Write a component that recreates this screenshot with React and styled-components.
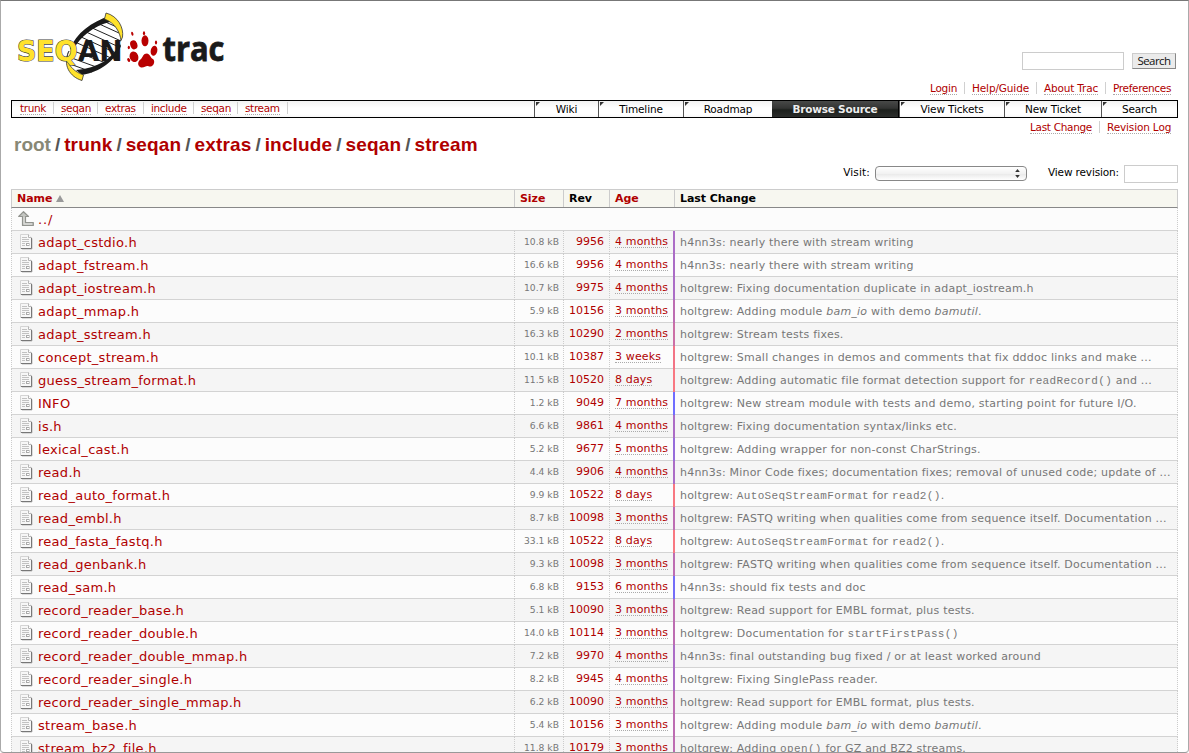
import React from "react";
import styled, { createGlobalStyle } from "styled-components";

const Global = createGlobalStyle`
  * { box-sizing: border-box; }
  body { margin: 0; background: #fff; color: #000; font-family: Verdana, "DejaVu Sans", sans-serif; font-size: 10.5px; }
`;

const Frame = styled.div`
  width: 1189px;
  height: 753px;
  overflow: hidden;
  border: 1px solid #aaa;
  border-top-color: #777;
  border-bottom-color: #999;
  border-radius: 0 0 4px 4px;
  padding: 0 10px;
  display: flex;
  flex-direction: column;
`;

const Header = styled.header`
  flex: none;
  height: 80px;
  display: flex;
  justify-content: space-between;
`;

const SearchForm = styled.div`
  display: flex;
  align-items: flex-start;
  gap: 8px;
  padding: 51px 2px 0 0;
`;

const TextInput = styled.input`
  width: ${(p) => p.$width}px;
  height: 18px;
  border: 1px solid #ccc;
  background: #fff;
  padding: 0;
`;

const SearchButton = styled.button`
  width: 44px;
  height: 16px;
  margin-top: 1px;
  padding: 0 0 1px;
  border: 1px solid #888;
  border-top-color: #ccc;
  border-left-color: #ccc;
  background: #ebebeb;
  color: #111;
  font: 11.5px/12px "Open Sans", sans-serif;
  letter-spacing: -0.55px;
`;

const LinkBar = styled.nav`
  flex: none;
  height: ${(p) => p.$height}px;
  padding-top: ${(p) => p.$top}px;
  display: flex;
  justify-content: flex-end;
`;

const BarItem = styled.span`
  width: ${(p) => p.$width}px;
  height: 12px;
  padding-left: 7px;
  border-left: 1px solid ${(p) => (p.$first ? "transparent" : "#d0d0d0")};
`;

const Link = styled.a`
  display: inline-block;
  height: 13px;
  line-height: 12px;
  color: #b00000;
  border-bottom: 1px dotted #aaa;
  letter-spacing: ${(p) => p.$spacing || -0.25}px;
  white-space: nowrap;
`;

const AgeLink = styled(Link)`
  line-height: 14px;
  letter-spacing: 0.15px;
`;

const MainNav = styled.nav`
  flex: none;
  height: 18px;
  border: 1px solid #000;
  background: linear-gradient(#f2f2f2, #fff 45%, #fff 80%, #f7f7f7);
  display: flex;
  justify-content: space-between;
`;

const Path = styled.div`
  display: flex;
  padding-top: 1px;
`;

const PathItem = styled.span`
  width: ${(p) => p.$width}px;
  height: 12px;
  padding-left: ${(p) => (p.$first ? 8 : 7)}px;
  border-right: 1px solid #d0d0d0;
`;

const Tabs = styled.div`
  display: flex;
`;

const Tab = styled.div`
  position: relative;
  width: ${(p) => p.$width}px;
  height: 16px;
  line-height: 16px;
  text-align: center;
  letter-spacing: -0.15px;
  border-left: 1px solid #555;
  &::before {
    content: "";
    position: absolute;
    left: 1px;
    top: 1px;
    border-top: 4px solid #333;
    border-right: 4px solid transparent;
  }
`;

const ActiveTab = styled(Tab)`
  color: #eee;
  font-weight: bold;
  letter-spacing: -0.22px;
  border-left: 0;
  border-right: 1px solid #000;
  background: linear-gradient(#484948, #333433 45%, #1d201d 55%, #2b2d2b);
  &::before { display: none; }
`;

const Title = styled.h1`
  flex: none;
  height: 26px;
  margin: 0;
  padding: 0 0 0 3px;
  font: bold 19px/20px "Liberation Sans", Arial, sans-serif;
  display: flex;
`;

const Crumb = styled.span`
  color: ${(p) => (p.$root ? "#888875" : "#b00000")};
  letter-spacing: ${(p) => (p.$root ? 0 : 0.16)}px;
`;

const Slash = styled.span`
  width: 13.2px;
  text-align: center;
  color: #555;
`;

const Jump = styled.div`
  flex: none;
  height: 28px;
  padding-top: 4px;
  display: flex;
  justify-content: flex-end;
  align-items: flex-start;
`;

const Label = styled.label`
  line-height: 14px;
  letter-spacing: ${(p) => p.$spacing}px;
  margin-right: 5px;
`;

const Select = styled.div`
  width: 152px;
  height: 15px;
  margin: 1px 21px 0 0;
  border: 1px solid #888;
  border-radius: 4px;
  background: linear-gradient(#fff, #f2f2f2 50%, #e8e8e8 51%, #fff);
  display: flex;
  justify-content: flex-end;
  align-items: center;
  padding-right: 6px;
`;

const Listing = styled.div`
  flex: none;
`;

const columns = "503px 49px 46px 64px 1fr";

const HeadRow = styled.div`
  display: grid;
  grid-template-columns: ${columns};
  height: 19px;
  background: #f7f7f0;
  border: 1px solid #ccc;
  border-bottom-color: #888;
`;

const HeadCell = styled.div`
  padding-left: 5px;
  border-left: ${(p) => (p.$first ? 0 : 1)}px solid #ccc;
  margin-left: ${(p) => (p.$first || p.$last ? 0 : -1)}px;
  color: ${(p) => (p.$sortable ? "#b00000" : "#000")};
  font-weight: bold;
  font-size: 11px;
  line-height: 17px;
  letter-spacing: -0.05px;
  display: flex;
  align-items: center;
  gap: 4px;
`;

const Row = styled.div`
  display: grid;
  grid-template-columns: ${columns};
  height: 23px;
  background: ${(p) => (p.$odd ? "#f5f5f5" : "#fcfcfc")};
  border-bottom: 1px solid #d3d3d3;
  line-height: 22px;
  white-space: nowrap;
`;

const NameCell = styled.div`
  display: flex;
  align-items: flex-start;
  border-left: 1px dotted #ccc;
  padding-left: ${(p) => (p.$up ? 6 : 8)}px;
  gap: ${(p) => (p.$up ? 4 : 5)}px;
  color: #b00000;
  font-size: 13px;
  line-height: 23px;
  letter-spacing: ${(p) => (p.$up ? 0.9 : 0.28)}px;
  svg { flex: none; margin-top: 3px; }
`;

const SizeCell = styled.div`
  border-left: 1px dotted #ccc;
  padding-right: 4px;
  text-align: right;
  color: #777;
  font-size: 9.2px;
`;

const RevCell = styled.div`
  border-left: 1px dotted #ccc;
  padding-right: 5px;
  text-align: right;
  color: #b00000;
  font-size: 11px;
  line-height: 22px;
`;

const AgeCell = styled.div`
  border-left: 1px dotted #ccc;
  padding: 4px 0 0 5px;
  font-size: 11px;
  line-height: 12px;
`;

const ChangeCell = styled.div`
  border-left: 2px solid ${(p) => p.$bar};
  border-right: 1px dotted #ccc;
  padding-left: 5px;
  overflow: hidden;
  color: #777;
  font-size: 11px;
  line-height: 24px;
  letter-spacing: 0.21px;
`;

const UpRest = styled.div`
  grid-column: 2 / -1;
  border-right: 1px dotted #ccc;
`;

const Code = styled.code`
  font-family: "Liberation Mono", monospace;
  font-size: 11px;
  letter-spacing: 0.35px;
`;

function Logo() {
  return (
    <svg width="222" height="80" viewBox="11 1 222 80">
      <path d="M107 17C92 22 77 33 71 48C66 61 70 69 82 74C97 72 113 60 119 46C124 33 119 22 107 17Z" fill="#fff" />
      <path d="M97 23L119 33M90 27L121 41M84 31L119 47M79 36L116 53M75 42L111 58M71 50L106 63M69 57L99 68M70 64L92 72M101 20L119 28" stroke="#222" strokeWidth="1" fill="none" />
      <path d="M109 16C92 22 76 33 70 49L73 50C80 37 93 26 110 22Z" fill="#1a1a1a" />
      <path d="M120 44C112 59 98 68 76 70L82 75C100 72 115 61 121 46Z" fill="#1a1a1a" />
      <path d="M106 13C118 16 124 28 122.500 37L121 40.500C120 32 115 23 104.500 19Z" fill="#ffe22c" stroke="#333" strokeWidth=".8" />
      <path d="M68 53C65 62 72 71 83.500 75L82 80.500C70 77 62 65 69 51Z" fill="#ffe22c" stroke="#333" strokeWidth=".8" />
      <g fontFamily="DejaVu Sans, sans-serif" fontWeight="bold" fontSize="29">
        <text x="17" y="61" textLength="60.500" lengthAdjust="spacingAndGlyphs" fill="#ffe22c" stroke="#444" strokeWidth="1.200" paintOrder="stroke">SEQ</text>
        <text x="77.700" y="61" textLength="45" lengthAdjust="spacingAndGlyphs" fill="#1a1a1a">AN</text>
      </g>
      <g fill="#b90000">
        <ellipse cx="133.800" cy="44.800" rx="3.500" ry="4.600" transform="rotate(-20 133.800 44.800)" />
        <ellipse cx="145" cy="40.800" rx="3.500" ry="5.500" />
        <ellipse cx="154" cy="50.800" rx="3.300" ry="5.100" transform="rotate(12 154 50.800)" />
        <ellipse cx="134" cy="56.800" rx="4.300" ry="5.400" transform="rotate(-22 134 56.800)" />
        <path d="M147 53.500C151 54.500 150 58 153 59C156 62 153 67.500 149 66.500C146 65 145 68 141 67.500C137 66 137.500 61 141 59C143 57 143 53.500 147 53.500Z" />
        <ellipse cx="132.300" cy="33.800" rx="1.100" ry="2" transform="rotate(-15 132.300 33.800)" />
        <ellipse cx="144" cy="33.300" rx="1.100" ry="2" />
        <ellipse cx="156" cy="42.500" rx="1.100" ry="2" />
        <ellipse cx="128.800" cy="47.500" rx="1.100" ry="1.800" />
        <ellipse cx="128.700" cy="60" rx="1.300" ry="2" transform="rotate(-30 128.700 60)" />
      </g>
      <text x="162.500" y="61" textLength="62" lengthAdjust="spacingAndGlyphs" fill="#1a1a1a" stroke="#1a1a1a" strokeWidth=".8" fontFamily="Open Sans, sans-serif" fontWeight="bold" fontSize="34">trac</text>
    </svg>
  );
}

function FileIcon() {
  return (
    <svg width="13" height="16" viewBox="0 0 13 16">
      <path d="M12 4.500V15H2" fill="none" stroke="#bbb" />
      <path d="M.5 .5H8.500L11.500 3.500V14.500H.5Z" fill="#f7f7f7" stroke="#d4d4d4" />
      <path d="M11.500 4V14.500H1" fill="none" stroke="#777" />
      <path d="M8.500 .5V3.500H11.500" fill="#fff" stroke="#b5b5b5" />
      <path d="M2 3.500H7M2 5.500H9M2 7.500H9M2 9.500H5M2 11.500H5" stroke="#c2c2c2" />
      <rect x="6.500" y="9.500" width="2.500" height="2" fill="#fff" stroke="#aaa" />
    </svg>
  );
}

function UpIcon() {
  return (
    <svg width="16" height="16" viewBox="0 0 16 16">
      <path d="M5.500 .7L10.500 5.500H7.500V11.500H15.300V14.500H4.500V5.500H.7Z" fill="#c4c6c2" stroke="#92948f" strokeWidth="1.200" strokeLinejoin="round" />
      <path d="M6 6V13H14" fill="none" stroke="#e0e0de" />
    </svg>
  );
}

const pathItems = [["trunk", 42], ["seqan", 44], ["extras", 46], ["include", 50], ["seqan", 44], ["stream", 50]];
const tabs = [["Wiki", 64], ["Timeline", 85], ["Roadmap", 89], ["Browse Source", 127], ["View Tickets", 105], ["New Ticket", 97], ["Search", 76]];
const crumbs = ["trunk", "seqan", "extras", "include", "seqan", "stream"];

const bars = {
  "8 days": "#f87882",
  "3 weeks": "#f27486",
  "2 months": "#cb6fa6",
  "3 months": "#bd6db2",
  "4 months": "#ab6dc6",
  "5 months": "#976ddb",
  "6 months": "#746df8",
  "7 months": "#706dff",
};

const bam = <>holtgrew: Adding module <i>bam_io</i> with demo <i>bamutil</i>.</>;
const auto = <>holtgrew: <Code>AutoSeqStreamFormat</Code> for <Code>read2()</Code>.</>;
const fastq = "holtgrew: FASTQ writing when qualities come from sequence itself. Documentation ...";

const files = [
  ["adapt_cstdio.h", "10.8", 9956, "4 months", "h4nn3s: nearly there with stream writing"],
  ["adapt_fstream.h", "16.6", 9956, "4 months", "h4nn3s: nearly there with stream writing"],
  ["adapt_iostream.h", "10.7", 9975, "4 months", "holtgrew: Fixing documentation duplicate in adapt_iostream.h"],
  ["adapt_mmap.h", "5.9", 10156, "3 months", bam],
  ["adapt_sstream.h", "16.3", 10290, "2 months", "holtgrew: Stream tests fixes."],
  ["concept_stream.h", "10.1", 10387, "3 weeks", "holtgrew: Small changes in demos and comments that fix dddoc links and make ..."],
  ["guess_stream_format.h", "11.5", 10520, "8 days", <>holtgrew: Adding automatic file format detection support for <Code>readRecord()</Code> and ...</>],
  ["INFO", "1.2", 9049, "7 months", "holtgrew: New stream module with tests and demo, starting point for future I/O."],
  ["is.h", "6.6", 9861, "4 months", "holtgrew: Fixing documentation syntax/links etc."],
  ["lexical_cast.h", "5.2", 9677, "5 months", "holtgrew: Adding wrapper for non-const CharStrings."],
  ["read.h", "4.4", 9906, "4 months", "h4nn3s: Minor Code fixes; documentation fixes; removal of unused code; update of ..."],
  ["read_auto_format.h", "9.9", 10522, "8 days", auto],
  ["read_embl.h", "8.7", 10098, "3 months", fastq],
  ["read_fasta_fastq.h", "33.1", 10522, "8 days", auto],
  ["read_genbank.h", "9.3", 10098, "3 months", fastq],
  ["read_sam.h", "6.8", 9153, "6 months", "h4nn3s: should fix tests and doc"],
  ["record_reader_base.h", "5.1", 10090, "3 months", "holtgrew: Read support for EMBL format, plus tests."],
  ["record_reader_double.h", "14.0", 10114, "3 months", <>holtgrew: Documentation for <Code>startFirstPass()</Code></>],
  ["record_reader_double_mmap.h", "7.2", 9970, "4 months", "h4nn3s: final outstanding bug fixed / or at least worked around"],
  ["record_reader_single.h", "8.2", 9945, "4 months", "holtgrew: Fixing SinglePass reader."],
  ["record_reader_single_mmap.h", "6.2", 10090, "3 months", "holtgrew: Read support for EMBL format, plus tests."],
  ["stream_base.h", "5.4", 10156, "3 months", bam],
  ["stream_bz2_file.h", "11.8", 10179, "3 months", <>holtgrew: Adding <Code>open()</Code> for GZ and BZ2 streams.</>],
];

export default function App() {
  return (
    <Frame>
      <Global />
      <Header>
        <Logo />
        <SearchForm>
          <TextInput $width={102} />
          <SearchButton>Search</SearchButton>
        </SearchForm>
      </Header>
      <LinkBar $height={19} $top={1}>
        <BarItem $first $width={42}><Link>Login</Link></BarItem>
        <BarItem $width={72}><Link $spacing={-0.13}>Help/Guide</Link></BarItem>
        <BarItem $width={69}><Link $spacing={-0.18}>About Trac</Link></BarItem>
        <BarItem $width={73}><Link $spacing={-0.34}>Preferences</Link></BarItem>
      </LinkBar>
      <MainNav>
        <Path>
          {pathItems.map(([name, width], i) => (
            <PathItem key={i} $width={width} $first={i === 0}><Link $spacing={-0.35}>{name}</Link></PathItem>
          ))}
        </Path>
        <Tabs>
          {tabs.map(([name, width]) => {
            const Item = name === "Browse Source" ? ActiveTab : Tab;
            return <Item key={name} $width={width}>{name}</Item>;
          })}
        </Tabs>
      </MainNav>
      <LinkBar $height={17} $top={3}>
        <BarItem $first $width={77}><Link $spacing={-0.31}>Last Change</Link></BarItem>
        <BarItem $width={79}><Link $spacing={-0.15}>Revision Log</Link></BarItem>
      </LinkBar>
      <Title>
        <Crumb $root>root</Crumb>
        {crumbs.map((name, i) => (
          <React.Fragment key={i}><Slash>/</Slash><Crumb>{name}</Crumb></React.Fragment>
        ))}
      </Title>
      <Jump>
        <Label $spacing={0.15}>Visit:</Label>
        <Select>
          <svg width="5" height="9" viewBox="0 0 5 9"><path d="M2.500 0L4.800 3H.2ZM2.500 9L4.800 6H.2Z" fill="#333" /></svg>
        </Select>
        <Label $spacing={-0.14}>View revision:</Label>
        <TextInput $width={54} />
      </Jump>
      <Listing>
        <HeadRow>
          <HeadCell $first $sortable>
            Name
            <svg width="8" height="7" viewBox="0 0 8 7"><path d="M4 0L8 7H0Z" fill="#999" /></svg>
          </HeadCell>
          <HeadCell $sortable>Size</HeadCell>
          <HeadCell>Rev</HeadCell>
          <HeadCell $sortable>Age</HeadCell>
          <HeadCell $last>Last Change</HeadCell>
        </HeadRow>
        <Row>
          <NameCell $up><UpIcon />../</NameCell>
          <UpRest />
        </Row>
        {files.map(([name, size, rev, age, change], i) => (
          <Row key={name} $odd={i % 2 === 0}>
            <NameCell><FileIcon />{name}</NameCell>
            <SizeCell>{size} kB</SizeCell>
            <RevCell>{rev}</RevCell>
            <AgeCell><AgeLink>{age}</AgeLink></AgeCell>
            <ChangeCell $bar={bars[age]}>{change}</ChangeCell>
          </Row>
        ))}
      </Listing>
    </Frame>
  );
}
